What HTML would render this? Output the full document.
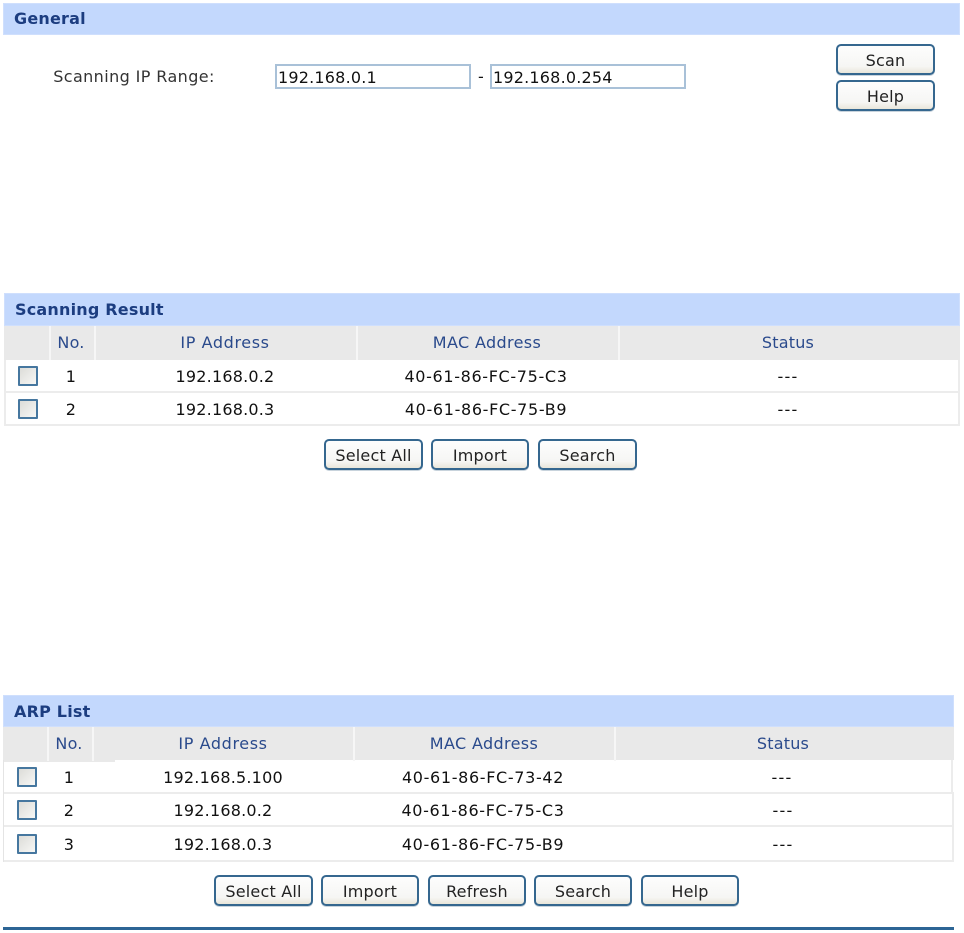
<!DOCTYPE html>
<html><head><meta charset="utf-8"><style>
html,body{margin:0;padding:0;background:#fff;width:964px;height:933px;overflow:hidden}
body{position:relative;font-family:"DejaVu Sans","Liberation Sans",sans-serif;font-size:16px;letter-spacing:.2px;color:#111}
div{position:absolute;box-sizing:border-box}
.bar{background:#c3d8fd;color:#1c3d80;font-weight:bold;font-size:16px;line-height:33px;padding-left:11px;box-shadow:inset 0 0 0 1px #cfdffd}
.g{background:#e9e9e9}
.sep{background:#f6f6f6;width:2px}
.rl{background:#ececec;height:2px}
.t{white-space:nowrap;transform:translateX(-50%);line-height:20px;height:20px}
.h{color:#2a4a8c;margin-top:1px}
.m{letter-spacing:.65px}
.d{letter-spacing:1.2px}
.cb{width:20px;height:20px;border:2px solid #46779f;background:linear-gradient(135deg,#dcdcd8,#f7f7f5);border-radius:1px}
.btn{height:31px;border:2px solid #35678f;border-radius:5px;background:linear-gradient(#fdfdfd,#f6f6f4 75%,#e9e6da);text-align:center;line-height:29px;color:#222;box-shadow:0 1px 0 #c8d3dc}
.ip{height:25px;border:2px solid #a9c1d8;background:#fff;line-height:23px;padding-left:1px;color:#111}
</style></head><body>

<div class="bar" style="left:3px;top:3px;width:957px;height:32px;line-height:32px">General</div>
<div class="t" style="left:134px;top:67px;color:#333;letter-spacing:.4px">Scanning IP Range:</div>
<div class="ip" style="left:275px;top:64px;width:196px">192.168.0.1</div>
<div class="t" style="left:481px;top:67px">-</div>
<div class="ip" style="left:490px;top:64px;width:196px">192.168.0.254</div>
<div class="btn" style="left:836px;top:44px;width:99px">Scan</div>
<div class="btn" style="left:836px;top:80px;width:99px">Help</div>

<div class="bar" style="left:4px;top:293px;width:956px;height:33px;padding-left:11px">Scanning Result</div>
<div class="g" style="left:4px;top:326px;width:956px;height:34px"></div>
<div class="sep" style="left:49px;top:326px;height:34px"></div>
<div class="sep" style="left:94px;top:326px;height:34px"></div>
<div class="sep" style="left:356px;top:326px;height:34px"></div>
<div class="sep" style="left:618px;top:326px;height:34px"></div>
<div class="rl" style="left:4px;top:391px;width:956px"></div>
<div class="rl" style="left:4px;top:424px;width:956px"></div>
<div style="left:4px;top:360px;width:2px;height:66px;background:#ececec"></div>
<div style="left:958px;top:360px;width:2px;height:66px;background:#ececec"></div>
<div class="t h" style="left:71px;top:332px">No.</div>
<div class="t h" style="left:225px;top:332px;letter-spacing:.6px">IP Address</div>
<div class="t h" style="left:487px;top:332px;letter-spacing:.36px">MAC Address</div>
<div class="t h" style="left:788px;top:332px">Status</div>
<div class="cb" style="left:18px;top:366px"></div>
<div class="t" style="left:71px;top:367px">1</div>
<div class="t" style="left:225px;top:367px">192.168.0.2</div>
<div class="t m" style="left:486px;top:367px">40-61-86-FC-75-C3</div>
<div class="t d" style="left:788px;top:367px">---</div>
<div class="cb" style="left:18px;top:399px"></div>
<div class="t" style="left:71px;top:400px">2</div>
<div class="t" style="left:225px;top:400px">192.168.0.3</div>
<div class="t m" style="left:486px;top:400px">40-61-86-FC-75-B9</div>
<div class="t d" style="left:788px;top:400px">---</div>
<div class="btn" style="left:324px;top:439px;width:99px">Select All</div>
<div class="btn" style="left:431px;top:439px;width:98px">Import</div>
<div class="btn" style="left:538px;top:439px;width:99px">Search</div>

<div class="bar" style="left:3px;top:695px;width:951px;height:32px">ARP List</div>
<div class="g" style="left:3px;top:727px;width:951px;height:33px"></div>
<div class="g" style="left:3px;top:760px;width:112px;height:2px"></div>
<div class="sep" style="left:47px;top:727px;height:34px"></div>
<div class="sep" style="left:92px;top:727px;height:34px"></div>
<div class="sep" style="left:353px;top:727px;height:34px"></div>
<div class="sep" style="left:614px;top:727px;height:34px"></div>
<div class="rl" style="left:3px;top:792px;width:951px"></div>
<div class="rl" style="left:3px;top:825px;width:951px"></div>
<div class="rl" style="left:3px;top:860px;width:951px"></div>
<div style="left:3px;top:760px;width:1px;height:102px;background:#e4e4e4"></div>
<div style="left:951px;top:760px;width:2px;height:33px;background:#ececec"></div>
<div style="left:952px;top:793px;width:2px;height:69px;background:#ececec"></div>
<div class="t h" style="left:69px;top:733px">No.</div>
<div class="t h" style="left:223px;top:733px;letter-spacing:.6px">IP Address</div>
<div class="t h" style="left:484px;top:733px;letter-spacing:.36px">MAC Address</div>
<div class="t h" style="left:783px;top:733px">Status</div>
<div class="cb" style="left:17px;top:767px"></div>
<div class="t" style="left:69px;top:768px">1</div>
<div class="t" style="left:223px;top:768px">192.168.5.100</div>
<div class="t m" style="left:483px;top:768px">40-61-86-FC-73-42</div>
<div class="t d" style="left:782px;top:768px">---</div>
<div class="cb" style="left:17px;top:800px"></div>
<div class="t" style="left:69px;top:801px">2</div>
<div class="t" style="left:223px;top:801px">192.168.0.2</div>
<div class="t m" style="left:483px;top:801px">40-61-86-FC-75-C3</div>
<div class="t d" style="left:783px;top:801px">---</div>
<div class="cb" style="left:17px;top:834px"></div>
<div class="t" style="left:69px;top:835px">3</div>
<div class="t" style="left:223px;top:835px">192.168.0.3</div>
<div class="t m" style="left:483px;top:835px">40-61-86-FC-75-B9</div>
<div class="t d" style="left:783px;top:835px">---</div>
<div class="btn" style="left:214px;top:875px;width:99px">Select All</div>
<div class="btn" style="left:321px;top:875px;width:98px">Import</div>
<div class="btn" style="left:428px;top:875px;width:98px">Refresh</div>
<div class="btn" style="left:534px;top:875px;width:98px">Search</div>
<div class="btn" style="left:641px;top:875px;width:98px">Help</div>
<div style="left:3px;top:927px;width:951px;height:3px;background:#2d6595"></div>
</body></html>
